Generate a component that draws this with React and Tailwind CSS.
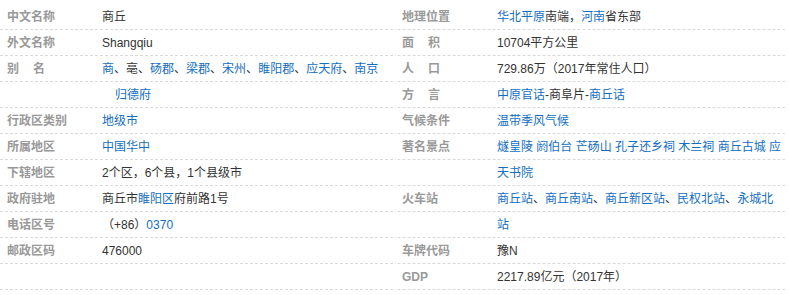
const link = 'text-[#136ec2]'

// one visual line of the info block, 26px tall with the dashed rule under it
function Line({ label, children, indent }) {
  return (
    <div className="flex h-[26px] leading-[26px] whitespace-nowrap bg-[linear-gradient(to_right,#dadada_55%,transparent_55%)] bg-[length:5px_1px] bg-repeat-x bg-bottom">
      <div className="w-[102px] shrink-0 pl-[7px] font-bold text-[#999]">{label}</div>
      <div className={`text-[#333] ${indent ? 'pl-[13px]' : ''}`}>{children}</div>
    </div>
  )
}

function Spaced({ a, b }) {
  return (
    <>
      <span className="inline-block w-[26px]">{a}</span>
      {b}
    </>
  )
}

function L({ children }) {
  return <span className={link}>{children}</span>
}

export default function App() {
  return (
    <div
      className="w-[789px] h-[295px] bg-white text-[12px] flex pt-[4px]"
      style={{ fontFamily: '"Liberation Sans", Arial, "Noto Sans CJK SC", sans-serif' }}
    >
      {/* left column */}
      <div className="w-[395px] shrink-0">
        <Line label="中文名称">商丘</Line>
        <Line label="外文名称">Shangqiu</Line>
        <Line label={<Spaced a="别" b="名" />}>
          <L>商</L>、亳、<L>砀郡</L>、<L>梁郡</L>、<L>宋州</L>、<L>睢阳郡</L>、<L>应天府</L>、<L>南京</L>
        </Line>
        <Line label="" indent>
          <L>归德府</L>
        </Line>
        <Line label="行政区类别">
          <L>地级市</L>
        </Line>
        <Line label="所属地区">
          <L>中国华中</L>
        </Line>
        <Line label="下辖地区">2个区，6个县，1个县级市</Line>
        <Line label="政府驻地">
          商丘市<L>睢阳区</L>府前路1号
        </Line>
        <Line label="电话区号">
          （+86）<L>0370</L>
        </Line>
        <Line label="邮政区码">476000</Line>
        <Line label="" />
      </div>

      {/* right column */}
      <div className="w-[390px] shrink-0">
        <Line label="地理位置">
          <L>华北平原</L>南端，<L>河南</L>省东部
        </Line>
        <Line label={<Spaced a="面" b="积" />}>10704平方公里</Line>
        <Line label={<Spaced a="人" b="口" />}>729.86万（2017年常住人口）</Line>
        <Line label={<Spaced a="方" b="言" />}>
          <L>中原官话</L>-商阜片-<L>商丘话</L>
        </Line>
        <Line label="气候条件">
          <L>温带季风气候</L>
        </Line>
        <Line label="著名景点">
          <L>燧皇陵 阏伯台 芒砀山 孔子还乡祠 木兰祠 商丘古城 应</L>
        </Line>
        <Line label="">
          <L>天书院</L>
        </Line>
        <Line label="火车站">
          <L>商丘站</L>、<L>商丘南站</L>、<L>商丘新区站</L>、<L>民权北站</L>、<L>永城北</L>
        </Line>
        <Line label="">
          <L>站</L>
        </Line>
        <Line label="车牌代码">豫N</Line>
        <Line label="GDP">2217.89亿元（2017年）</Line>
      </div>
    </div>
  )
}
